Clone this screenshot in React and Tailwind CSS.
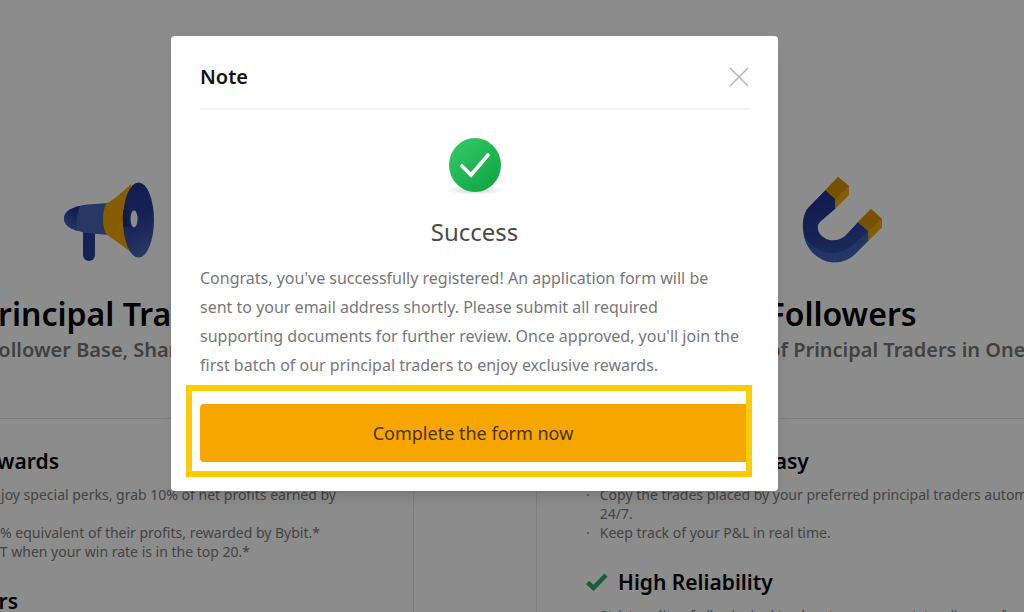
import React from 'react'

function Megaphone() {
  return (
    <svg width="92" height="84" viewBox="0 0 92 84" aria-hidden="true">
      <defs>
        <linearGradient id="mBell" x1="0.3" y1="0" x2="0.5" y2="1">
          <stop offset="0" stopColor="#24348c" />
          <stop offset="0.5" stopColor="#2a3f9c" />
          <stop offset="1" stopColor="#4767b8" />
        </linearGradient>
        <linearGradient id="mCap" x1="0.8" y1="0" x2="0.2" y2="1">
          <stop offset="0" stopColor="#1c2b8c" />
          <stop offset="1" stopColor="#4a6cc0" />
        </linearGradient>
        <linearGradient id="mTube" x1="0" y1="0" x2="1" y2="0">
          <stop offset="0" stopColor="#1a2870" />
          <stop offset="1" stopColor="#3550ac" />
        </linearGradient>
      </defs>
      <path d="M20 48h12v29a6 6 0 0 1-12 0z" fill="#273f9c" />
      <path d="M46 25 24 26.500C12 28 1 33 1 41s11 12 23 14l22 2z" fill="#4566b4" />
      <path d="M17 28C7 30 1 34 1 40.500S7 50 14 53c-1-9 0-18 3-25z" fill="url(#mCap)" />
      <path d="M43 26C54 19 61 13 68 6v68L43 56c-4-8-4-22 0-30z" fill="#f2a900" />
      <ellipse cx="75.500" cy="42" rx="15.500" ry="37.500" fill="url(#mBell)" />
      <path d="M60.500 32H73c4 3 4 14 0 17H60.500c-1-6-1-11 0-17z" fill="url(#mTube)" />
      <ellipse cx="71" cy="41" rx="3.500" ry="8.500" fill="#ffffff" />
    </svg>
  )
}

function Magnet() {
  return (
    <svg width="80" height="88" viewBox="0 0 80 88" aria-hidden="true">
      <defs>
        <linearGradient id="magnet" x1="0.2" y1="0" x2="0.5" y2="1">
          <stop offset="0" stopColor="#1f2e8c" />
          <stop offset="0.7" stopColor="#2c449f" />
          <stop offset="1" stopColor="#3654ac" />
        </linearGradient>
      </defs>
      <path d="M23.500 14 6 32C-1 40-1 60 7 72c11 16 31 19 45 7l14.500-14.500V55L56 46 43 60c-7 6-19 6-25-2-3-4-3-9 0-12l15.500-13.500V23z" fill="url(#magnet)" />
      <path d="M1.500 58c1 5 3 10 5.500 14 11 16 31 19 45 7l14.500-14.500V55L51 69C34 83 11 78 1.500 58z" fill="#4a6fc4" opacity=".6" />
      <path d="m36 1 11 9v9L33.500 32.500V23L23.500 14z" fill="#f2a900" />
      <path d="m36 1 11 9-13.500 13-10-9z" fill="#d89400" />
      <path d="m69 33 11 10v8.500l-13.500 13V55L56 46z" fill="#f2a900" />
      <path d="m69 33 11 10-13.500 12L56 46z" fill="#d89400" />
    </svg>
  )
}

function SuccessIcon() {
  return (
    <svg width="60" height="60" viewBox="0 0 60 60" aria-hidden="true">
      <defs>
        <linearGradient id="ok" x1="0.1" y1="0.1" x2="0.8" y2="0.9">
          <stop offset="0" stopColor="#32c765" />
          <stop offset="1" stopColor="#12a844" />
        </linearGradient>
        <radialGradient id="okShadow">
          <stop offset="0" stopColor="#000" stopOpacity=".2" />
          <stop offset="1" stopColor="#000" stopOpacity="0" />
        </radialGradient>
      </defs>
      <ellipse cx="30" cy="54" rx="29" ry="5" fill="url(#okShadow)" />
      <ellipse cx="30" cy="29" rx="26" ry="27" fill="url(#ok)" />
      <path d="m17 30 9 9 17-20" fill="none" stroke="#fff" strokeWidth="3.600" strokeLinecap="round" strokeLinejoin="miter" />
    </svg>
  )
}

function Audience({ icon, title, tagline, width }) {
  return (
    <section className={`flex flex-col items-center whitespace-nowrap ${width}`}>
      <div className="flex h-22 items-center">{icon}</div>
      <h2 className="mt-7 text-[32px] leading-[44px] font-semibold text-black">{title}</h2>
      <p className="text-xl leading-7 font-semibold text-[#777777]">{tagline}</p>
    </section>
  )
}

function Heading({ children }) {
  return <h3 className="text-[21px] leading-7 font-semibold whitespace-nowrap text-black">{children}</h3>
}

function Tick() {
  return (
    <svg className="shrink-0" width="22" height="18" viewBox="0 0 22 18" aria-hidden="true">
      <path d="m1.500 9.500 6 5.500L20 2" fill="none" stroke="#2fa866" strokeWidth="4.500" />
    </svg>
  )
}

function Line({ width, children }) {
  return <p className={`flex justify-end whitespace-nowrap ${width}`}>{children}</p>
}

function Page() {
  return (
    <main className="col-start-1 row-start-1 h-screen min-w-0 overflow-hidden bg-white pt-[176px]">
      <div className="flex gap-[122px]">
        <div className="w-[414px] shrink-0">
          <Audience width="w-[218px]" icon={<Megaphone />} title="Principal Traders" tagline="Grow Your Follower Base, Share Trading Profits" />
          <div className="mt-[54px] h-[240px] border-t border-r border-[#e6e6e6] pt-7 text-sm leading-[19px] text-[#7c7c7c]">
            <div className="flex w-[59px] justify-end"><Heading>Rewards</Heading></div>
            <div className="mt-[10px]">
              <Line width="w-[336px]">Enjoy special perks, grab 10% of net profits earned by</Line>
              <br />
              <Line width="w-[320px]">1% equivalent of their profits, rewarded by Bybit.*</Line>
              <Line width="w-[250px]">USDT when your win rate is in the top 20.*</Line>
            </div>
            <div className="mt-[26px] flex w-[18px] justify-end"><Heading>Followers</Heading></div>
          </div>
        </div>
        <div className="w-[612px] shrink-0">
          <Audience width="w-[612px]" icon={<Magnet />} title="Followers" tagline="Copy the Trades of Principal Traders in One Click" />
          <div className="mt-[54px] h-[240px] border-t border-l border-[#e6e6e6] pt-7 pr-10 pl-[49px] text-sm leading-[19px] text-[#7c7c7c]">
            <div className="flex items-center gap-[10px]"><Tick /><Heading>Seamless and Easy</Heading></div>
            <ul className="mt-[10px]">
              <li className="flex gap-[10px]"><span>·</span><span>Copy the trades placed by your preferred principal traders automatically 24/7.</span></li>
              <li className="flex gap-[10px]"><span>·</span><span>Keep track of your P&amp;L in real time.</span></li>
            </ul>
            <div className="mt-[26px] flex items-center gap-[10px]"><Tick /><Heading>High Reliability</Heading></div>
            <ul className="mt-[10px]">
              <li className="flex gap-[10px] whitespace-nowrap"><span>·</span><span>Strict audits of all principal traders to ensure outstanding performance.</span></li>
            </ul>
          </div>
        </div>
      </div>
    </main>
  )
}

function NoteDialog() {
  return (
    <div className="z-10 col-start-1 row-start-1 flex items-start justify-center bg-black/45 pt-9 pr-[75px]">
      <div role="dialog" aria-labelledby="note-title" className="w-[607px] rounded bg-white px-[14px] pb-[14px] shadow-lg">
        <header className="mr-[13px] ml-[15px] flex items-center justify-between border-b-2 border-[#f3f3f3] pt-[21px] pb-[11px]">
          <h1 id="note-title" className="text-xl leading-10 font-semibold text-[#121214]">Note</h1>
          <button type="button" aria-label="Close" className="p-[2px]">
            <svg width="20" height="20" viewBox="0 0 20 20" aria-hidden="true">
              <path d="m1 1 18 18M19 1 1 19" stroke="#b0b0b0" strokeWidth="1.300" />
            </svg>
          </button>
        </header>
        <div className="mx-[15px] flex flex-col items-center pt-[26px]">
          <SuccessIcon />
          <h2 className="mt-[20px] text-2xl leading-8 text-[#4a4a4c]">Success</h2>
          <p className="mt-4 pr-[6px] text-base leading-[29px] text-[#77777a]">
            Congrats, you've successfully registered! An application form will be sent to your email address shortly. Please submit all required supporting documents for further review. Once approved, you'll join the first batch of our principal traders to enjoy exclusive rewards.
          </p>
        </div>
        <div className="mt-[5px] mr-3 ml-px border-[6px] border-[#ffcc00] pt-[13px] pb-[9px] pl-2">
          <button type="button" className="h-[58px] w-full rounded-l bg-[#f7a600] text-lg text-[#4a3300]">Complete the form now</button>
        </div>
      </div>
    </div>
  )
}

export default function App() {
  return (
    <div className="grid min-h-screen grid-cols-[minmax(0,1fr)] overflow-hidden font-['Noto_Sans','Open_Sans',sans-serif]">
      <Page />
      <NoteDialog />
    </div>
  )
}
